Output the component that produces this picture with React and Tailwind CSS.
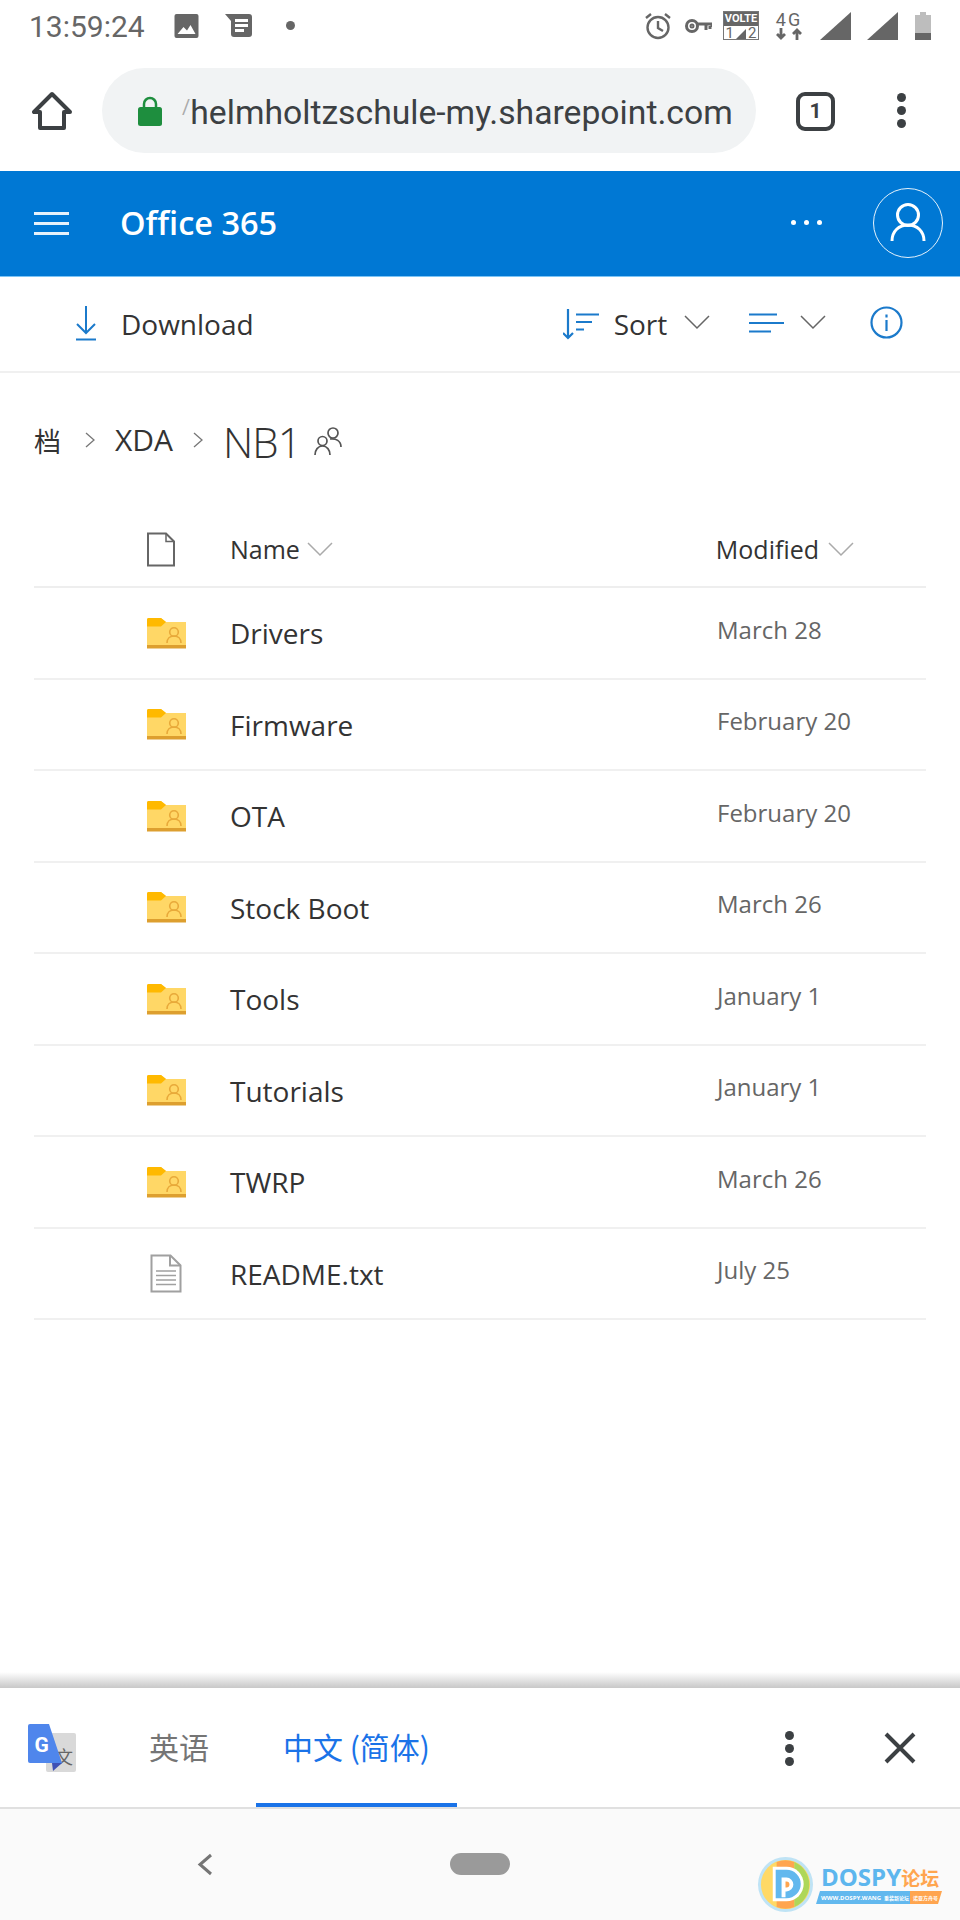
const rows = [
  { name: 'Drivers', date: 'March 28', h: 'h-[92px]' },
  { name: 'Firmware', date: 'February 20', h: 'h-[91px]' },
  { name: 'OTA', date: 'February 20', h: 'h-[92px]' },
  { name: 'Stock Boot', date: 'March 26', h: 'h-[91px]' },
  { name: 'Tools', date: 'January 1', h: 'h-[92px]' },
  { name: 'Tutorials', date: 'January 1', h: 'h-[91px]' },
  { name: 'TWRP', date: 'March 26', h: 'h-[92px]' },
  { name: 'README.txt', date: 'July 25', h: 'h-[91px]', file: true },
];

function FolderIcon() {
  return (
    <svg className="ml-[1px]" width="39" height="31" viewBox="0 0 39 31">
      <path d="M0 1.500A1.500 1.500 0 0 1 1.500 0H14l5 4h20v24H0z" fill="#ffd766" />
      <path d="M0 1.500A1.500 1.500 0 0 1 1.500 0H14l5 4-5 4.500H0z" fill="#ffb900" />
      <path d="M0 27h39v3.500H0z" fill="#dd9f2f" />
      <circle cx="27" cy="14" r="4.300" fill="none" stroke="#e8a93a" strokeWidth="1.600" />
      <path d="M20 25c0-4.500 3-7 7-7s7 2.500 7 7" fill="none" stroke="#e8a93a" strokeWidth="1.600" />
    </svg>
  );
}

function TextFileIcon() {
  return (
    <svg width="32" height="39" viewBox="0 0 32 39" fill="none" stroke="#a0a0a0">
      <path d="M1.500 1.500h19l10 10v26h-29z" fill="#fff" strokeWidth="2" />
      <path d="M20 1.500v10h10.500" strokeWidth="2" />
      <path d="M6 17h20M6 21.500h20M6 26h20M6 30.500h20" strokeWidth="1.500" />
    </svg>
  );
}

function Chevron({ className, color = '#666' }) {
  return (
    <svg className={className} width="26" height="15" viewBox="0 0 26 15" fill="none" stroke={color} strokeWidth="1.500">
      <path d="M1 1l12 12L25 1" />
    </svg>
  );
}

function Crumb() {
  return (
    <svg width="12" height="18" viewBox="0 0 12 18" fill="none" stroke="#777" strokeWidth="1.300">
      <path d="M2 2l8 7-8 7" />
    </svg>
  );
}

function StatusBar() {
  return (
    <div className="flex h-[56px] items-center pb-[5px] pl-[29px] pr-[29px] text-[#666]">
      <span className="mt-[3px] text-[30px] leading-none font-['Roboto',sans-serif]">13:59:24</span>
      <svg className="ml-[29px]" width="25" height="24" viewBox="0 0 24 24">
        <rect width="24" height="24" rx="2" fill="#666" />
        <path d="M3 20l6-7 3.500 3.500L16 11l5 9z" fill="#fff" />
      </svg>
      <svg className="ml-[26px]" width="27" height="23" viewBox="0 0 27 23">
        <path d="M0 0h24a3 3 0 0 1 3 3v17a3 3 0 0 1-3 3H9a3 3 0 0 1-3-3V7z" fill="#666" />
        <path d="M10 5h13v3H10zM10 10h13v3H10zM10 15h9v3h-9z" fill="#fff" />
      </svg>
      <span className="ml-[34px] h-[9px] w-[9px] rounded-full bg-[#666]" />
      <div className="ml-auto flex items-center">
        <svg width="28" height="28" viewBox="0 0 28 28" fill="none" stroke="#666" strokeWidth="2.400">
          <circle cx="14" cy="15.500" r="10.500" />
          <path d="M14 9v7l5 3M2 6l5-4M26 6l-5-4" />
        </svg>
        <svg className="ml-[13px]" width="27" height="16" viewBox="0 0 27 16" fill="none" stroke="#666" strokeWidth="3">
          <circle cx="7" cy="8" r="5.500" />
          <circle cx="7" cy="8" r="1" />
          <path d="M12 6h15v3M21 6v6M25 8v3" />
        </svg>
        <div className="ml-[11px] flex h-[29px] w-[36px] flex-col border border-[#777] font-['Roboto',sans-serif]">
          <span className="h-[14px] bg-[#666] text-center text-[11px] font-bold leading-[14px] text-white">VOLTE</span>
          <div className="flex flex-1 items-center justify-center gap-[2px] text-[15px] leading-none">
            <span>1</span>
            <svg width="10" height="10" viewBox="0 0 10 10"><path d="M0 10L10 0v10z" fill="#666" /></svg>
            <span>2</span>
          </div>
        </div>
        <div className="ml-[16px] flex w-[28px] flex-col items-center font-['Roboto',sans-serif]">
          <span className="text-[18px] leading-[16px] tracking-[2px]">4G</span>
          <svg width="28" height="12" viewBox="0 0 28 12" fill="none" stroke="#666" strokeWidth="2.800">
            <path d="M6 0v10M2 6l4 4 4-4M22 12V2M18 6l4-4 4 4" />
          </svg>
        </div>
        <svg className="ml-[17px]" width="31" height="28" viewBox="0 0 31 28"><path d="M0 28L31 0v28z" fill="#666" /></svg>
        <svg className="ml-[16px]" width="31" height="28" viewBox="0 0 31 28"><path d="M0 28L31 0v28z" fill="#666" /></svg>
        <svg className="ml-[17px]" width="16" height="28" viewBox="0 0 16 28">
          <path d="M5 0h6v3h5v25H0V3h5z" fill="#bdbdbd" />
          <path d="M0 21h16v7H0z" fill="#666" />
        </svg>
      </div>
    </div>
  );
}

function BrowserBar() {
  return (
    <div className="flex h-[115px] items-start pt-[12px] bg-white">
      <svg className="ml-[32px] mt-[23px]" width="40" height="40" viewBox="0 0 40 40" fill="none" stroke="#3c4043" strokeWidth="4" strokeLinejoin="round">
        <path d="M20 3L2 21h6v16h24V21h6z" />
      </svg>
      <div className="ml-[30px] flex h-[85px] w-[654px] items-center rounded-full bg-[#f1f3f4] pl-[36px]">
        <svg width="24" height="30" viewBox="0 0 24 30">
          <path d="M6 12V8a6 6 0 0 1 12 0v4" fill="none" stroke="#1e8e3e" strokeWidth="2.500" />
          <rect y="11" width="24" height="19" rx="2.500" fill="#1e8e3e" />
        </svg>
        <span className="ml-[20px] mt-[4px] whitespace-nowrap font-['Roboto',sans-serif] text-[33.7px] leading-none text-[#3c4043]">
          <span className="text-[#aaa] text-[20px] align-[10px]">/</span>helmholtzschule-my.sharepoint.com
        </span>
      </div>
      <div className="ml-[40px] mt-[24px] flex h-[39px] w-[39px] items-center justify-center rounded-[9px] border-[4px] border-[#3c4043] font-['Roboto',sans-serif] text-[21px] font-bold text-[#3c4043]">1</div>
      <div className="ml-[62px] mt-[25px] flex flex-col gap-[4px]">
        <span className="h-[9px] w-[9px] rounded-full bg-[#3c4043]" />
        <span className="h-[9px] w-[9px] rounded-full bg-[#3c4043]" />
        <span className="h-[9px] w-[9px] rounded-full bg-[#3c4043]" />
      </div>
    </div>
  );
}

function OfficeHeader() {
  return (
    <div className="flex h-[106px] items-center bg-[#0078d4] border-b border-[#7cc4f5] pl-[34px] text-white">
      <div className="flex w-[35px] flex-col gap-[7px]">
        <span className="h-[3px] bg-white/90" />
        <span className="h-[3px] bg-white/90" />
        <span className="h-[3px] bg-white/90" />
      </div>
      <span className="ml-[51px] mt-[-1px] text-[32.500px] font-semibold leading-none">Office 365</span>
      <div className="ml-auto mr-[51px] flex gap-[8px] mt-[-2px]">
        <span className="h-[5px] w-[5px] rounded-full bg-white" />
        <span className="h-[5px] w-[5px] rounded-full bg-white" />
        <span className="h-[5px] w-[5px] rounded-full bg-white" />
      </div>
      <div className="mr-[17px] mt-[-2px] flex h-[70px] w-[70px] items-center justify-center rounded-full border border-white/90">
        <svg width="36" height="40" viewBox="0 0 36 40" fill="none" stroke="white" strokeWidth="3">
          <circle cx="18" cy="12" r="10.500" />
          <path d="M2 38c0-10 7-16 16-16s16 6 16 16" />
        </svg>
      </div>
    </div>
  );
}

function Toolbar() {
  return (
    <div className="flex h-[96px] items-center border-b-2 border-[#f0f0f0] text-[#333] pl-[76px] font-['Open_Sans',sans-serif]">
      <svg className="mt-[-1px]" width="20" height="35" viewBox="0 0 20 35" fill="none" stroke="#1b7acb" strokeWidth="2">
        <path d="M10 0v27M1 18l9 9 9-9M0 33.500h20" />
      </svg>
      <span className="ml-[25px] text-[28px] leading-none mt-[-1px]">Download</span>
      <svg className="ml-[309px]" width="36" height="31" viewBox="0 0 36 31" fill="none" stroke="#1b7acb" strokeWidth="2.200">
        <path d="M5 0v29M0 24l5 5 5-5M13 5.500h23M13 13h16M13 20.500h8" />
      </svg>
      <span className="ml-[15px] text-[28px] leading-none mt-[-1px]">Sort</span>
      <Chevron className="ml-[17px] mt-[-3px]" />
      <svg className="ml-[39px] mt-[-3px]" width="35" height="20" viewBox="0 0 35 20" fill="none" stroke="#1b7acb" strokeWidth="2.200">
        <path d="M0 1.500h28M0 10h35M0 18.500h22" />
      </svg>
      <Chevron className="ml-[16px] mt-[-3px]" />
      <svg className="ml-[44px] mt-[-3px]" width="33" height="33" viewBox="0 0 33 33" fill="none" stroke="#1b7acb" strokeWidth="2.200">
        <circle cx="16.500" cy="16.500" r="15" />
        <path d="M16.500 14v11M16.500 8.500v3" />
      </svg>
    </div>
  );
}

function Breadcrumb() {
  return (
    <div className="flex h-[139px] items-center pb-[5px] pl-[34px] text-[#333] font-['Open_Sans',sans-serif]">
      <span className="text-[27px] leading-none font-['Noto_Sans_CJK_SC',sans-serif]">档</span>
      <div className="ml-[23px]"><Crumb /></div>
      <span className="ml-[19px] text-[30px] leading-none">XDA</span>
      <div className="ml-[19px]"><Crumb /></div>
      <span className="ml-[19px] mt-[4px] text-[42px] font-light leading-none tracking-[-1px]">NB1</span>
      <svg className="ml-[13px] mt-[2px]" width="28" height="30" viewBox="0 0 28 30" fill="none" stroke="#555" strokeWidth="1.700">
        <circle cx="19" cy="7" r="5" />
        <circle cx="8.500" cy="15" r="4.500" />
        <path d="M1 29c0-5 3-9 7.500-9s7.500 4 7.500 9M16 13c6-1 11 2 11 8" />
      </svg>
    </div>
  );
}

function FileList() {
  return (
    <div className="mx-[34px] font-['Open_Sans',sans-serif]">
      <div className="flex h-[76px] items-center border-b-2 border-[#eee]">
        <div className="ml-[112px] w-[84px]">
          <svg width="30" height="35" viewBox="0 0 30 35" fill="none" stroke="#666" strokeWidth="2">
            <path d="M2 1.500h18l8 8v24H2z" />
            <path d="M20 1.500v8h8" strokeWidth="1.500" />
          </svg>
        </div>
        <span className="text-[25px] leading-none text-[#333] mt-[1px]">Name</span>
        <Chevron className="ml-[7px]" color="#aaa" />
        <span className="ml-auto text-[25px] leading-none text-[#333] mt-[1px]">Modified</span>
        <Chevron className="ml-[9px] mr-[72px]" color="#aaa" />
      </div>
      {rows.map((row) => (
        <div key={row.name} className={`flex items-center border-b-2 border-[#f0f0f0] ${row.h}`}>
          <div className="flex w-[196px] pl-[112px]">
            {row.file ? <div className="pl-[4px]"><TextFileIcon /></div> : <FolderIcon />}
          </div>
          <span className="text-[28px] leading-none text-[#333]">{row.name}</span>
          <span className="ml-auto w-[209px] text-[24px] leading-none text-[#666] mt-[-7px]">{row.date}</span>
        </div>
      ))}
    </div>
  );
}

function TranslateLogo() {
  return (
    <svg width="48" height="48" viewBox="0 0 48 48">
      <rect x="18" y="9" width="30" height="39" rx="2" fill="#d9d9d9" />
      <text x="27" y="40" fontSize="18" fill="#666" fontFamily="'Noto Sans CJK SC', sans-serif">文</text>
      <path d="M2 0h19l13 39H2a2 2 0 0 1-2-2V2a2 2 0 0 1 2-2z" fill="#4f86ec" />
      <path d="M24 39h10l-9 8z" fill="#3f51b5" />
      <text x="6.500" y="27.500" fontSize="21" fontWeight="700" fill="#fff" fontFamily="'Roboto', sans-serif">G</text>
    </svg>
  );
}

function TranslateBar() {
  return (
    <div className="mt-auto">
      <div className="h-[16px] bg-gradient-to-b from-white to-[#c8c8c8]" />
      <div className="flex h-[121px] items-center border-b-2 border-[#e0e0e0] bg-white font-['Noto_Sans_CJK_SC',sans-serif]">
        <div className="ml-[28px]"><TranslateLogo /></div>
        <span className="ml-[73px] mt-[-4px] text-[30px] leading-none text-[#757575]">英语</span>
        <div className="relative ml-[47px] flex h-full w-[201px] items-center justify-center text-[#1a73e8]">
          <span className="mt-[-4px] text-[30px] leading-none whitespace-nowrap">中文 (简体)</span>
          <span className="absolute bottom-0 left-0 right-0 h-[4px] bg-[#1a73e8]" />
        </div>
        <div className="ml-auto mr-[90px] mt-[2px] flex flex-col gap-[4px]">
          <span className="h-[9px] w-[9px] rounded-full bg-[#3c4043]" />
          <span className="h-[9px] w-[9px] rounded-full bg-[#3c4043]" />
          <span className="h-[9px] w-[9px] rounded-full bg-[#3c4043]" />
        </div>
        <svg className="mr-[44px] mt-[1px]" width="32" height="32" viewBox="0 0 32 32" fill="none" stroke="#3c4043" strokeWidth="4">
          <path d="M2 2l28 28M30 2L2 30" />
        </svg>
      </div>
    </div>
  );
}

function Watermark() {
  return (
    <div className="absolute bottom-[7px] right-[18px] flex items-center">
      <svg className="shrink-0" width="57" height="57" viewBox="0 0 58 58">
        <circle cx="29" cy="29" r="28" fill="#bfe3f5" />
        <circle cx="29" cy="29" r="25" fill="#ffd966" />
        <path d="M20 6a25 25 0 0 1 18 0v46a25 25 0 0 1-18 0z" fill="#ffa54f" />
        <path d="M38 6a25 25 0 0 1 0 46z" fill="#aed75a" />
        <path d="M16 11h14a17.500 17.500 0 0 1 0 35H16z" fill="#fff" />
        <path d="M19 14h11a14.500 14.500 0 0 1 0 29H19z" fill="#62b8ee" />
        <path d="M25 22h5a7 7 0 0 1 0 14h-1v6h-4z" fill="#fff" />
        <path d="M29 26h1a3 3 0 0 1 0 6h-1z" fill="#ffa54f" />
      </svg>
      <div className="ml-[2px] flex w-[126px] shrink-0 flex-col font-['Open_Sans',sans-serif]">
        <div className="flex h-[24px] items-center whitespace-nowrap pl-[5px] font-bold">
          <span className="text-[24px] leading-none text-[#5db6ee]">DOSPY</span>
          <span className="text-[#ffa54f] font-['Noto_Sans_CJK_SC',sans-serif] text-[19px] leading-none">论坛</span>
        </div>
        <div className="mt-[2px] flex h-[13px] items-center whitespace-nowrap text-[6px] font-bold leading-none text-white [clip-path:polygon(4px_0,100%_0,calc(100%-4px)_100%,0_100%)]">
          <span className="flex h-full w-[94px] shrink-0 items-center gap-[3px] bg-[#62b8ee] pl-[5px]">
            <span>WWW.DOSPY.WANG</span>
            <span className="font-['Noto_Sans_CJK_SC',sans-serif] text-[5px]">重装新论坛</span>
          </span>
          <span className="flex h-full w-[32px] shrink-0 items-center bg-[#ffa54f] pl-[3px] font-['Noto_Sans_CJK_SC',sans-serif] text-[5px]">诺亚方舟号</span>
        </div>
      </div>
    </div>
  );
}

export default function App() {
  return (
    <div className="flex h-[1920px] w-[960px] flex-col overflow-hidden bg-white font-['Open_Sans',sans-serif]">
      <StatusBar />
      <BrowserBar />
      <OfficeHeader />
      <Toolbar />
      <Breadcrumb />
      <FileList />
      <TranslateBar />
      <div className="relative h-[111px] shrink-0 bg-[#fafafa]">
        <svg className="absolute left-[197px] top-[44px]" width="16" height="23" viewBox="0 0 16 23" fill="none" stroke="#757575" strokeWidth="3">
          <path d="M14 2L3 11.500 14 21" />
        </svg>
        <div className="absolute left-[450px] top-[44px] h-[22px] w-[60px] rounded-full bg-[#9a9a9a]" />
        <Watermark />
      </div>
    </div>
  );
}
